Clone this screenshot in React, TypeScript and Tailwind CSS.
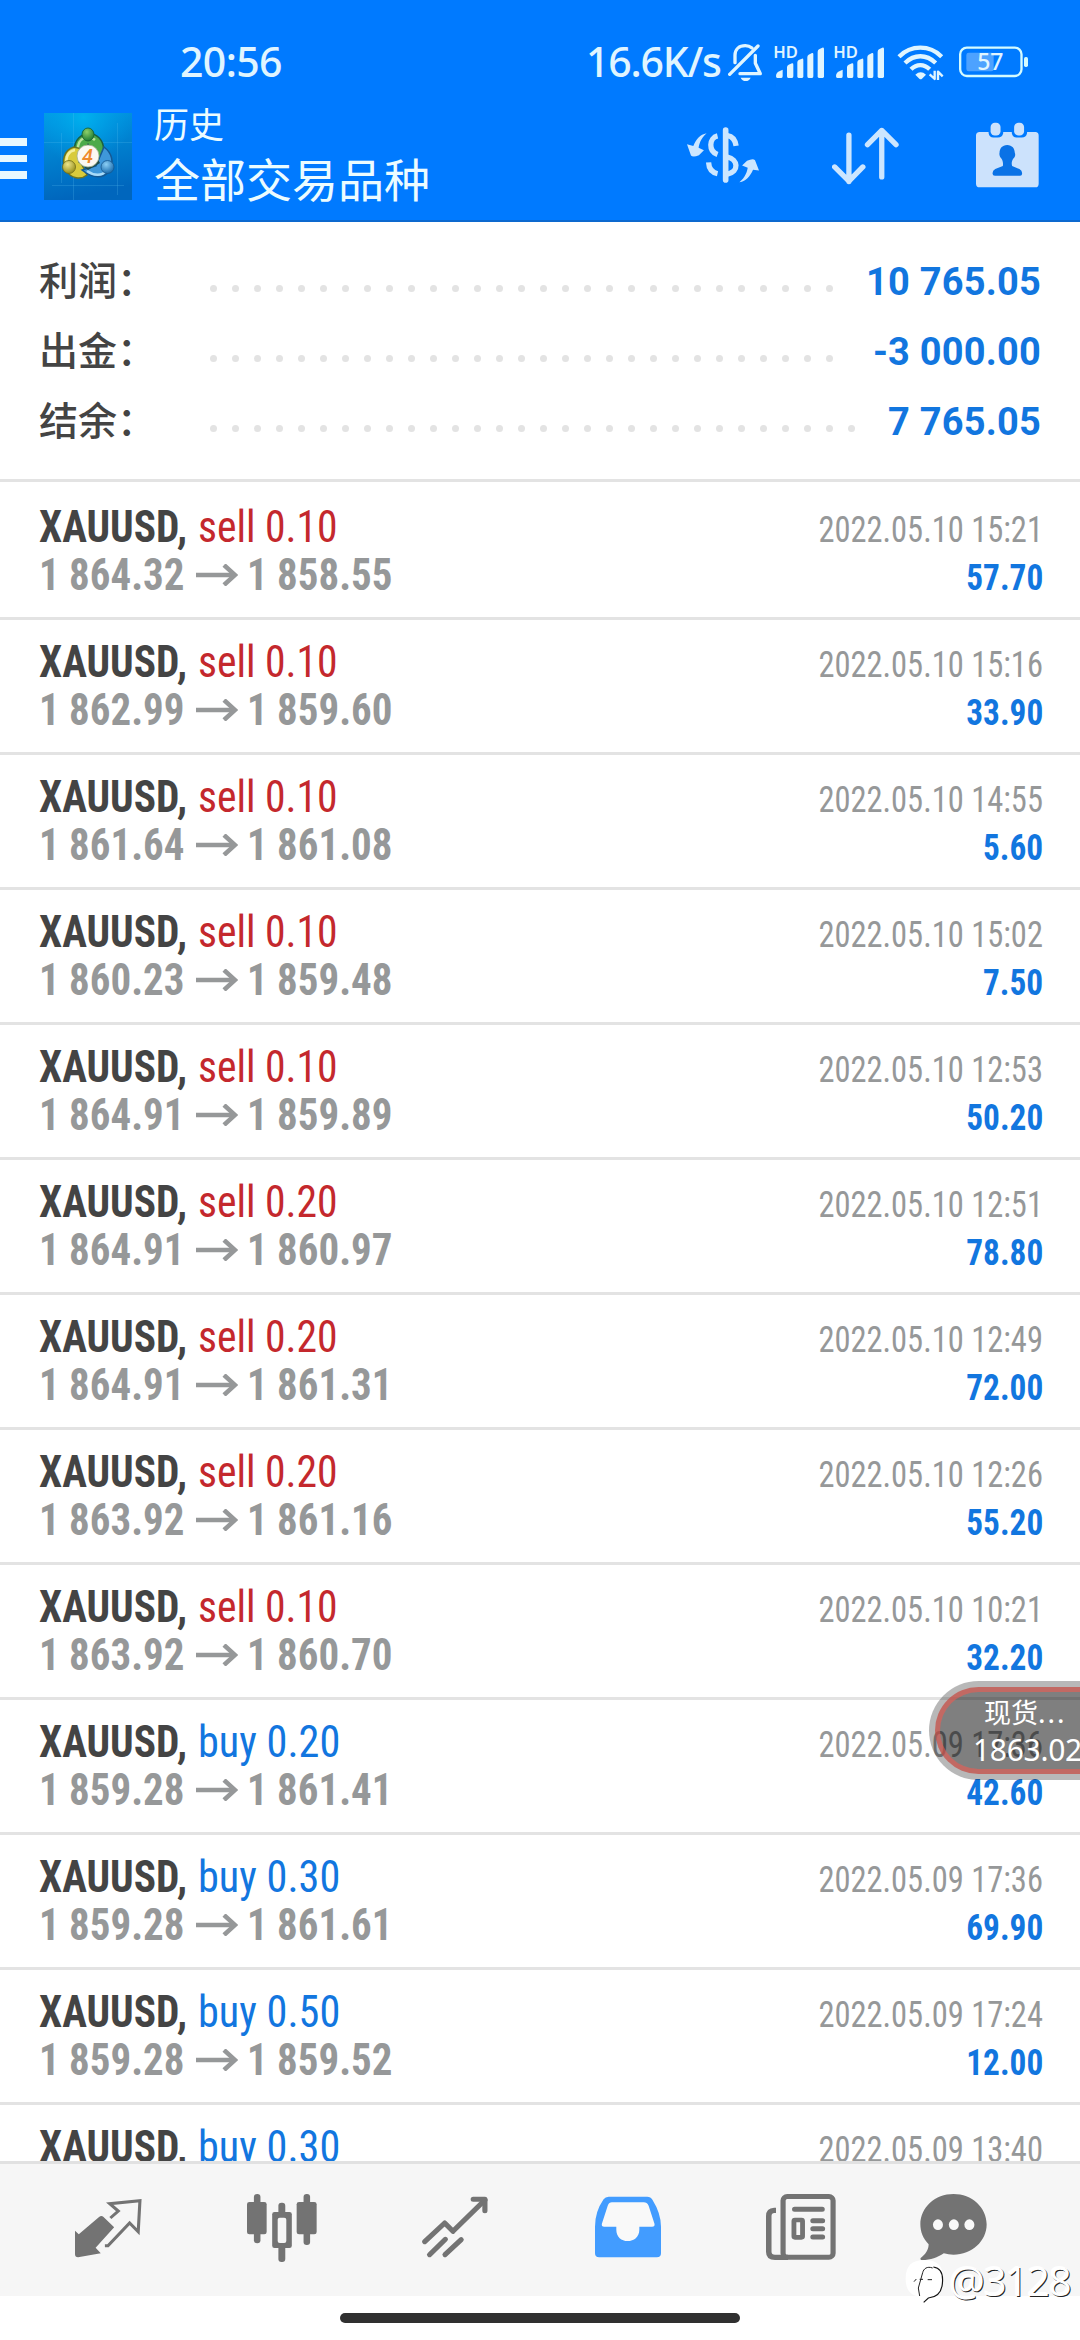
import type { ReactNode } from 'react';
import { clsx } from 'clsx';

type Side = 'sell' | 'buy';

interface Deal {
  side: Side;
  volume: string;
  open: string;
  close: string;
  time: string;
  profit: string;
}

const SUMMARY = [
  { label: '利润：', value: '10 765.05', dots: 29 },
  { label: '出金：', value: '-3 000.00', dots: 29 },
  { label: '结余：', value: '7 765.05', dots: 30 },
];

const DEALS: Deal[] = [
  { side: 'sell', volume: '0.10', open: '1 864.32', close: '1 858.55', time: '2022.05.10 15:21', profit: '57.70' },
  { side: 'sell', volume: '0.10', open: '1 862.99', close: '1 859.60', time: '2022.05.10 15:16', profit: '33.90' },
  { side: 'sell', volume: '0.10', open: '1 861.64', close: '1 861.08', time: '2022.05.10 14:55', profit: '5.60' },
  { side: 'sell', volume: '0.10', open: '1 860.23', close: '1 859.48', time: '2022.05.10 15:02', profit: '7.50' },
  { side: 'sell', volume: '0.10', open: '1 864.91', close: '1 859.89', time: '2022.05.10 12:53', profit: '50.20' },
  { side: 'sell', volume: '0.20', open: '1 864.91', close: '1 860.97', time: '2022.05.10 12:51', profit: '78.80' },
  { side: 'sell', volume: '0.20', open: '1 864.91', close: '1 861.31', time: '2022.05.10 12:49', profit: '72.00' },
  { side: 'sell', volume: '0.20', open: '1 863.92', close: '1 861.16', time: '2022.05.10 12:26', profit: '55.20' },
  { side: 'sell', volume: '0.10', open: '1 863.92', close: '1 860.70', time: '2022.05.10 10:21', profit: '32.20' },
  { side: 'buy', volume: '0.20', open: '1 859.28', close: '1 861.41', time: '2022.05.09 17:36', profit: '42.60' },
  { side: 'buy', volume: '0.30', open: '1 859.28', close: '1 861.61', time: '2022.05.09 17:36', profit: '69.90' },
  { side: 'buy', volume: '0.50', open: '1 859.28', close: '1 859.52', time: '2022.05.09 17:24', profit: '12.00' },
  { side: 'buy', volume: '0.30', open: '', close: '', time: '2022.05.09 13:40', profit: '' },
];

/* ---------- status bar ---------- */

function BellOffIcon() {
  return (
    <svg className="h-[42px] w-9" viewBox="24 36 108 126" fill="none" stroke="#e0f5ff" strokeWidth="10" strokeLinecap="round" strokeLinejoin="round">
      <path d="M45 98V76C45 57 58 47 76 47C84 47 91 50 96 54" />
      <path d="M106 76V100L121 131H60" />
      <path d="M114 48L29 133" />
      <path d="M62 143H92C89 150 84 153 77 153S65 150 62 143Z" fill="#e0f5ff" stroke="none" />
    </svg>
  );
}

function SignalIcon() {
  return (
    <svg className="h-[42px] w-[51px]" viewBox="162 36 153 126" fill="#e0f5ff">
      <text x="160" y="84" fontSize="48" fontWeight="600" textLength="74" lengthAdjust="spacingAndGlyphs" fontFamily="Noto Sans, sans-serif">HD</text>
      <path d="M168 139Q168 128 178 124L188 119V139Q188 144 184 144H172Q168 144 168 139Z" />
      <path d="M201 112Q201 106 206 104L216 100Q220 99 220 104V139Q220 144 216 144H205Q201 144 201 139Z" />
      <path d="M232 98Q232 92 236 90L246 86Q250 85 250 90V139Q250 144 246 144H236Q232 144 232 139Z" />
      <path d="M262 82Q262 76 266 74L276 69Q280 68 280 73V139Q280 144 276 144H266Q262 144 262 139Z" />
      <path d="M293 66Q293 60 297 58L307 53Q312 52 312 57V139Q312 144 308 144H297Q293 144 293 139Z" />
    </svg>
  );
}

function WifiIcon() {
  return (
    <svg className="h-[42px] w-[47px]" viewBox="529 36 141 126" fill="none" stroke="#e0f5ff" strokeWidth="13">
      <path d="M535 80C571 44 627 44 663 80" />
      <path d="M553 99C581 72 617 72 645 99" />
      <path d="M571 118C588 101 610 101 627 118" />
      <path d="M584 134Q600 120 616 134L604 146Q600 150 596 146Z" fill="#e0f5ff" stroke="none" />
      <path d="M642 122V147L627 133M652 150V125L666 139" strokeWidth="7" strokeLinejoin="round" />
    </svg>
  );
}

function BatteryIcon() {
  return (
    <svg className="h-[42px] w-[70px]" viewBox="713 36 210 126" fill="none">
      <rect x="716.500" y="53" width="184" height="85" rx="20" stroke="#d4fbff" strokeWidth="7" />
      <rect x="735" y="68" width="82" height="56" rx="7" fill="#4da2ff" />
      <rect x="908" y="81" width="12" height="30" rx="5" fill="#d4fbff" />
      <text x="807" y="121" fontSize="72" fontWeight="500" textAnchor="middle" textLength="79" lengthAdjust="spacingAndGlyphs" fill="#e0f5ff" fontFamily="Noto Sans, sans-serif">57</text>
    </svg>
  );
}

function StatusBar() {
  return (
    <div className="flex h-[84px] items-start pt-[42px] text-[#e0f5ff] font-['Noto_Sans',sans-serif] text-[41px] font-medium leading-[39px]">
      <span className="ml-[180px] w-[406px] tracking-[-0.6px]">20:56</span>
      <span className="w-[142px] whitespace-nowrap tracking-[-1.2px]">16.6K/s</span>
      <BellOffIcon />
      <div className="ml-[10px] flex gap-[9px]">
        <SignalIcon />
        <SignalIcon />
      </div>
      <div className="ml-[12px] flex gap-[15px]">
        <WifiIcon />
        <BatteryIcon />
      </div>
    </div>
  );
}

/* ---------- app bar ---------- */

function AppLogo() {
  return (
    <svg className="h-[87px] w-[88px]" viewBox="0 0 88 87">
      <defs>
        <linearGradient id="sky" x1="0" y1="0" x2="0.2" y2="1">
          <stop offset="0" stopColor="#009be6" />
          <stop offset="0.5" stopColor="#0080cf" />
          <stop offset="1" stopColor="#0066bd" />
        </linearGradient>
        <radialGradient id="glow" cx="0.45" cy="0.05" r="0.55">
          <stop offset="0" stopColor="#00b4f0" stopOpacity="0.9" />
          <stop offset="1" stopColor="#00a0e8" stopOpacity="0" />
        </radialGradient>
        <radialGradient id="green" cx="0.4" cy="0.3" r="0.7">
          <stop offset="0" stopColor="#8fd06a" />
          <stop offset="1" stopColor="#1f7d34" />
        </radialGradient>
        <radialGradient id="gold" cx="0.4" cy="0.3" r="0.7">
          <stop offset="0" stopColor="#eee58a" />
          <stop offset="1" stopColor="#97901c" />
        </radialGradient>
        <radialGradient id="azure" cx="0.4" cy="0.3" r="0.7">
          <stop offset="0" stopColor="#8ccff5" />
          <stop offset="1" stopColor="#1a6cae" />
        </radialGradient>
      </defs>
      <rect width="88" height="87" fill="url(#sky)" />
      <rect width="88" height="87" fill="url(#glow)" />
      <path d="M29.500 0V87M0 29.500H88M73.500 10V82M17.500 20V70M8 72.500H80" stroke="#5fc4f2" strokeOpacity="0.22" />
      <ellipse cx="45" cy="36" rx="14.500" ry="15.500" fill="#4caa4a" stroke="#1c6040" strokeWidth="1.500" />
      <path d="M34 37C33 25 44 21 51 27" fill="none" stroke="#b9e39a" strokeWidth="2.500" />
      <path d="M30 34C20 37 17 48 22 57C27 66 37 67 43 62L36 48L38 36Z" fill="#d8cb3c" stroke="#6c7420" strokeWidth="1.500" />
      <path d="M23 52C21 43 25 38 31 37" fill="none" stroke="#f4ef9c" strokeWidth="2.500" />
      <path d="M60 34C68 40 70 49 66 57C60 66 49 66 38 57L52 53Z" fill="#3f98da" stroke="#155a94" strokeWidth="1.500" />
      <path d="M43 58C50 63 58 63 62 58" fill="none" stroke="#a9dbf8" strokeWidth="2.500" />
      <path d="M34 49L44 57L56 50L44 30Z" fill="#1d4a4c" />
      <ellipse cx="44" cy="21.500" rx="6" ry="6.500" fill="url(#green)" stroke="#175c2c" strokeWidth="0.800" />
      <circle cx="25" cy="54" r="6.500" fill="url(#gold)" stroke="#6d6a18" strokeWidth="0.800" />
      <circle cx="63.500" cy="54" r="6.500" fill="url(#azure)" stroke="#17588f" strokeWidth="0.800" />
      <circle cx="44" cy="43" r="11" fill="#fbf8f2" stroke="#9fb08f" strokeWidth="0.800" />
      <text x="43.500" y="50" textAnchor="middle" fontSize="20" fontWeight="500" fontStyle="italic" fill="#ef8a2c" fontFamily="Roboto, sans-serif">4</text>
    </svg>
  );
}

function CurrencyIcon() {
  return (
    <svg className="h-14 w-[72px]" viewBox="48 50 217 167" fill="none" stroke="#cce6ff" strokeWidth="16">
      <path d="M164.500 58V209" strokeWidth="17" strokeLinecap="round" />
      <path d="M140 76C114 82 112 122 140 132" />
      <path d="M113 156C114 176 122 186 140 190" />
      <path d="M170 75C184 77 193 86 196 106" />
      <path d="M170 140C202 146 206 184 170 191" />
      <path d="M107 68C89 84 85 100 83 112L99 119L84 134Q66 142 60 135L48 101L67 106C76 86 87 72 107 68Z" fill="#cce6ff" stroke="none" />
      <path d="M206 216C224 200 229 184 231 172L214 165L229 151Q247 142 253 149L265 180L247 178C238 198 227 212 206 216Z" fill="#cce6ff" stroke="none" />
    </svg>
  );
}

function SortIcon() {
  return (
    <svg className="h-[58px] w-[67px]" viewBox="485 50 202 174" fill="none" stroke="#cce6ff" strokeWidth="16" strokeLinecap="round" strokeLinejoin="round">
      <path d="M536 74V214M493 170L536 213L578 170" />
      <path d="M635 200V60M592 103L635 60L678 103" />
    </svg>
  );
}

function CalendarUserIcon() {
  return (
    <svg className="h-[66px] w-[63px]" viewBox="919 37 190 197" fill="#cce2fc">
      <path d="M930 66H957V70Q960 83 971 83H985Q998 83 1001 70V66H1027V70Q1030 83 1041 83H1057Q1070 83 1073 70V66H1098Q1108 66 1108 77V222Q1108 233 1098 233H930Q919 233 919 222V77Q919 66 930 66Z" />
      <rect x="963" y="38" width="30" height="39" rx="13" />
      <rect x="1034" y="38" width="30" height="39" rx="13" />
      <path d="M1013 105C998 105 990 116 990 129C988 136 992 143 996 147C1001 155 1001 163 1000 169L977 178Q969 182 969 190V192Q969 198 976 198H1052Q1058 198 1058 192V190Q1058 182 1050 178L1028 169C1026 163 1026 155 1031 147C1036 143 1039 136 1036 129C1036 116 1028 105 1013 105Z" fill="#0a72e6" />
    </svg>
  );
}

function AppBar() {
  return (
    <div className="flex h-[136px] items-start">
      <div className="mt-[54px] flex w-[27px] flex-col gap-[9px]">
        <span className="h-[7.5px] bg-[#e8f8ff]" />
        <span className="h-[7.5px] bg-[#e8f8ff]" />
        <span className="h-[7.5px] bg-[#e8f8ff]" />
      </div>
      <div className="ml-[17px] mt-[29px]">
        <AppLogo />
      </div>
      <div className="ml-[22px] mt-[13px] flex-1 font-['Noto_Sans_CJK_SC',sans-serif] text-[#ecfcff]">
        <p className="text-[35px] leading-[52px]">历史</p>
        <p className="text-[46px] leading-[57px]">全部交易品种</p>
      </div>
      <div className="flex items-start pr-[41px]">
        <div className="mr-[73px] mt-[43px]"><CurrencyIcon /></div>
        <div className="mr-[77px] mt-[43px]"><SortIcon /></div>
        <div className="mt-[38px]"><CalendarUserIcon /></div>
      </div>
    </div>
  );
}

/* ---------- history ---------- */

function SummaryRow({ label, value, dots }: { label: string; value: string; dots: number }) {
  return (
    <div className="flex h-[70px] items-center pl-[39px] pr-[39px]">
      <span className="w-[163px] whitespace-nowrap pb-[9px] font-['Noto_Sans_CJK_SC',sans-serif] text-[39px] font-medium leading-[50px] text-[#444444]">
        {label}
      </span>
      <span className="flex pt-[13px]" aria-hidden="true">
        {Array.from({ length: dots }, (_, i) => (
          <span key={i} className="flex w-[22px] justify-center">
            <span className="size-[7px] rounded-full bg-[#e3e3e3]" />
          </span>
        ))}
      </span>
      <span className="ml-auto whitespace-nowrap font-['Roboto',sans-serif] text-[38px] font-bold leading-[70px] tracking-[0.2px] text-[#1276df]">
        {value}
      </span>
    </div>
  );
}

function ArrowRight() {
  return (
    <svg className="h-[22px] w-[42px]" viewBox="0 0 42 22" fill="none" stroke="#969899" strokeWidth="4.500" aria-hidden="true">
      <path d="M0 11H38" />
      <path d="M28 1L39 11L28 21" />
    </svg>
  );
}

function DealRow({ deal }: { deal: Deal }) {
  return (
    <div className="flex h-[135px] shrink-0 justify-between border-b-[3px] border-[#e3e3e3] pl-[39px] pr-[37px] font-['Roboto_Condensed',sans-serif]">
      <div className="pt-[18px] text-[44px] leading-[48px]">
        <div className="flex whitespace-nowrap">
          <span className="w-[159px] origin-left scale-x-[0.94] font-bold text-[#444444]">XAUUSD,</span>
          <span
            className={clsx(
              'origin-left',
              deal.side === 'sell' ? 'scale-x-[0.945] text-[#c4282d]' : 'scale-x-[0.96] text-[#1276df]',
            )}
          >
            {deal.side} {deal.volume}
          </span>
        </div>
        {deal.open && (
          <div className="flex items-center font-bold text-[#969899]">
            <span className="w-[157px] origin-left scale-x-[0.93] whitespace-nowrap">{deal.open}</span>
            <ArrowRight />
            <span className="ml-[9px] origin-left scale-x-[0.93] whitespace-nowrap">{deal.close}</span>
          </div>
        )}
      </div>
      <div className="flex flex-col items-end pt-[21px] text-[36px] leading-[48px]">
        <span className="origin-right scale-x-[0.902] whitespace-nowrap text-[#969899]">{deal.time}</span>
        <span className="origin-right scale-x-[0.925] font-bold text-[#1276df]">{deal.profit}</span>
      </div>
    </div>
  );
}

function QuoteBubble() {
  return (
    <div className="absolute left-[929px] top-[1681px] h-[99px] w-[200px] rounded-full bg-black/28 p-[6px]">
      <div className="h-full rounded-full border-[5px] border-[#ef5a50]/60 bg-black/31 pl-[33px] pt-px text-white">
        <p className="whitespace-nowrap pl-[11px] font-['Noto_Sans_CJK_SC',sans-serif] text-[27px] leading-[38px]">
          现货<span className="tracking-[2px]">...</span>
        </p>
        <p className="font-['Noto_Sans',sans-serif] text-[30px] leading-[38px] tracking-[-0.3px]">1863.02</p>
      </div>
    </div>
  );
}

/* ---------- bottom navigation ---------- */

function TradeIcon() {
  return (
    <svg className="h-[68px] w-[67px]" viewBox="219 342 195 204" preserveAspectRatio="none" fill="#737373">
      <path d="M219 452L230 463L289 411Q296 405 302 411L333 442L279 503L294 520L228 532Q219 532 219 523Z" />
      <path d="M322 414L345 393L320 371L408 362L403 455L378 429L315 497H306" fill="none" stroke="#737373" strokeWidth="9" />
    </svg>
  );
}

function ChartIcon() {
  return (
    <svg className="h-[68px] w-[70px]" viewBox="715 342 203 204" preserveAspectRatio="none" fill="#737373">
      <rect x="735" y="342" width="19" height="148" rx="9" />
      <rect x="715" y="366" width="57" height="97" rx="7" />
      <rect x="879" y="342" width="19" height="153" rx="9" />
      <rect x="859" y="366" width="58" height="97" rx="7" />
      <rect x="806" y="368" width="20" height="178" rx="9" />
      <rect x="788" y="396" width="57" height="108" rx="7" />
      <rect x="804" y="413" width="25" height="76" rx="6" fill="#f6f6f6" />
    </svg>
  );
}

function TrendIcon() {
  return (
    <svg className="h-[68px] w-[66px]" viewBox="1223 342 192 204" preserveAspectRatio="none" fill="none" stroke="#737373" strokeWidth="15" strokeLinecap="round">
      <path d="M1231 485L1289 429L1313 454L1406 360" strokeLinejoin="round" />
      <path d="M1372 358H1406V392" strokeLinejoin="round" />
      <path d="M1245 524L1291 478M1290 524L1337 479" />
    </svg>
  );
}

function InboxIcon() {
  return (
    <svg className="h-[68px] w-[66px]" viewBox="158 342 192 204" preserveAspectRatio="none">
      <path d="M198 350H310Q320 350 325 359Q350 400 350 440V520Q350 532 338 532H170Q158 532 158 520V440Q158 395 183 358Q188 350 198 350Z" fill="#429cff" />
      <path d="M207 367H300Q309 367 314 377L331 431Q333 440 324 440H287V449C287 471 271 483 253 483S220 471 220 449V440H185Q176 440 178 431L195 377Q199 367 207 367Z" fill="#f9f9f9" />
    </svg>
  );
}

function NewsIcon() {
  return (
    <svg className="h-[68px] w-[70px]" viewBox="656 342 203 204" preserveAspectRatio="none" fill="none" stroke="#737373" strokeWidth="15" strokeLinecap="round">
      <rect x="705.500" y="349.500" width="145" height="182" rx="12" />
      <path d="M685 391H680Q664 392 664 408V515Q664 532 682 532H720" strokeLinecap="butt" strokeWidth="16" />
      <path d="M739 388H819M792 422H820M792 446H820M792 471H820" />
      <rect x="737" y="420" width="25" height="52" rx="3" strokeWidth="14" />
    </svg>
  );
}

function ChatIcon() {
  return (
    <svg className="h-[68px] w-[67px]" viewBox="1102 342 194 204" preserveAspectRatio="none" fill="#737373">
      <path d="M1199 342C1252 342 1295 382 1295 433S1252 524 1199 524Q1184 524 1171 520C1153 532 1133 540 1108 541Q1101 540 1104 534C1118 523 1127 510 1127 493C1111 476 1103 456 1103 433C1103 382 1146 342 1199 342Z" />
      <g fill="#f9f9f9">
        <ellipse cx="1154" cy="434" rx="14.500" ry="16" />
        <ellipse cx="1200" cy="434" rx="14.500" ry="16" />
        <ellipse cx="1245" cy="434" rx="14.500" ry="16" />
      </g>
    </svg>
  );
}

function NavItem({ children, narrow = false }: { children: ReactNode; narrow?: boolean }) {
  return (
    <div className={clsx('flex shrink-0 justify-center pt-[30px]', narrow ? 'w-[132px]' : 'w-[173px]')}>
      {children}
    </div>
  );
}

function Watermark() {
  return (
    <div className="absolute left-[905px] top-[2256px] flex items-start">
      <svg className="h-[50px] w-10" viewBox="18 54 120 150" fill="none" aria-hidden="true">
        <path d="M76 66C115 66 132 84 132 118C132 146 124 170 96 180L74 192L80 178C38 178 20 160 20 122C20 84 38 66 76 66Z" fill="#ffffff" />
        <path d="M103 87C128 90 133 112 130 138C127 166 114 178 88 180L74 193" stroke="#111111" strokeWidth="3.500" />
        <path d="M101 90C84 84 74 92 71 104L58 150L62 174M45 131L52 123M62 124H72M86 125H99" stroke="#222222" strokeWidth="3" />
      </svg>
      <span className="ml-[4px] font-['Open_Sans',sans-serif] text-[40px] font-normal leading-[50px] tracking-[-1.2px] text-white [text-shadow:1px_1px_0_#222222,-1px_-1px_0_#ffffff]">
        @3128
      </span>
    </div>
  );
}

export default function App() {
  return (
    <div className="relative flex h-[2340px] w-[1080px] flex-col overflow-hidden bg-white">
      <header className="h-[222px] shrink-0 border-b-2 border-[#0d69cf] bg-[#007aff]">
        <StatusBar />
        <AppBar />
      </header>

      <section className="h-[260px] shrink-0 border-b-[3px] border-[#e3e3e3] pt-[25px]">
        {SUMMARY.map(row => <SummaryRow key={row.label} {...row} />)}
      </section>

      <main className="flex min-h-0 flex-1 flex-col overflow-hidden pt-[3px]">
        {DEALS.map((deal, i) => <DealRow key={i} deal={deal} />)}
      </main>

      <nav className="flex h-[135px] shrink-0 border-t-[3px] border-[#e1e1e1] bg-[#f6f6f6] pl-[22px]">
        <NavItem><TradeIcon /></NavItem>
        <NavItem><ChartIcon /></NavItem>
        <NavItem><TrendIcon /></NavItem>
        <NavItem><InboxIcon /></NavItem>
        <NavItem><NewsIcon /></NavItem>
        <NavItem narrow><ChatIcon /></NavItem>
      </nav>

      <footer className="flex h-[44px] shrink-0 justify-center pt-[17px]">
        <span className="h-[10px] w-[400px] rounded-full bg-[#303030]" />
      </footer>

      <QuoteBubble />
      <Watermark />
    </div>
  );
}
